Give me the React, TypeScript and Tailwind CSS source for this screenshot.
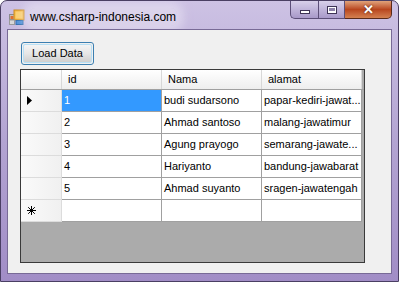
import React from "react";

const rows = [
  { id: "1", nama: "budi sudarsono", alamat: "papar-kediri-jawat..." },
  { id: "2", nama: "Ahmad santoso", alamat: "malang-jawatimur" },
  { id: "3", nama: "Agung prayogo", alamat: "semarang-jawate..." },
  { id: "4", nama: "Hariyanto", alamat: "bandung-jawabarat" },
  { id: "5", nama: "Ahmad suyanto", alamat: "sragen-jawatengah" },
];

function AppIcon() {
  return (
    <svg width="16" height="16" viewBox="0 0 16 16">
      <rect x="0.5" y="5.5" width="5" height="5" fill="#c0c0c0" stroke="#8a8a8a" />
      <rect x="1.5" y="7" width="3" height="3" fill="#e07030" />
      <rect x="5" y="1" width="10" height="10" fill="#f5b840" stroke="#c98a20" />
      <rect x="6.5" y="2.5" width="7" height="7" fill="#fbd070" />
      <rect x="0.5" y="11" width="5" height="4.5" fill="#d8d8d8" stroke="#9a9a9a" />
      <rect x="7" y="11.5" width="7" height="4" fill="#4d90d8" stroke="#2f6fb0" />
    </svg>
  );
}

export default function App() {
  const font = { fontFamily: '"Liberation Sans", Arial, sans-serif' };
  return (
    <div
      className="w-[399px] h-[282px] rounded-t-[7px] border border-[#4a3f63] bg-gradient-to-b from-[#cdc2e4] via-[#b3a4d2] to-[#a18dc6] flex flex-col overflow-hidden"
      style={font}
    >
      <div className="h-[28px] flex items-start shrink-0">
        <div className="mt-[8px] ml-[8px]">
          <AppIcon />
        </div>
        <div className="mt-[7px] ml-[4px] text-[12px] text-black px-[1px] bg-[#ebe6f4]/50 shadow-[0_0_10px_6px_rgba(236,231,246,0.55)] rounded-[6px]">
          www.csharp-indonesia.com
        </div>
        <div className="flex-1" />
        <div className="flex h-[19px] mr-[6px] -mt-px">
          <div className="w-[28px] h-full border border-[#5c4f78] border-r-0 rounded-bl-[5px] bg-gradient-to-b from-[#d8d0ea] to-[#a899c9] flex items-center justify-center">
            <div className="w-[10px] h-[4px] mt-[4px] bg-white border border-[#3d3355]" />
          </div>
          <div className="w-[27px] h-full border border-[#5c4f78] bg-gradient-to-b from-[#d8d0ea] to-[#a899c9] flex items-center justify-center">
            <div className="w-[10px] h-[8px] border border-[#3d3355] bg-white flex items-center justify-center">
              <div className="w-[6px] h-[3px] bg-[#8c80a8]" />
            </div>
          </div>
          <div className="w-[47px] h-full border border-[#5a2a1a] border-l-0 rounded-br-[5px] bg-gradient-to-b from-[#e0a27a] via-[#b8461e] to-[#d48050] flex items-center justify-center">
            <span className="text-white text-[13px] font-bold leading-none [text-shadow:0_0_2px_#4a1a08]">✕</span>
          </div>
        </div>
      </div>

      <div className="mx-[6px] mb-[7px] flex-1 border border-[#786a96] bg-[#f0f0f0] flex flex-col">
        <div className="ml-[13px] mt-[12px] w-[73px] h-[23px] rounded-[3px] border border-[#3c7fb1] p-px">
          <div className="w-full h-full rounded-[2px] bg-gradient-to-b from-[#f4f4f4] via-[#e6e6e6] to-[#cfcfcf] flex items-center justify-center text-[11px] text-black border border-[#b8e0f5]">
            Load Data
          </div>
        </div>

        <div className="ml-[12px] mt-[4px] w-[345px] h-[194px] border border-[#3a3a3a] bg-[#ababab] flex flex-col text-[11px] text-black">
          <div className="flex h-[20px] border-b border-[#a0a0a0]">
            <div className="w-[41px] border-r border-[#d8d8d8] bg-gradient-to-b from-[#ffffff] to-[#f0f0f0]" />
            {["id", "Nama", "alamat"].map((h) => (
              <div
                key={h}
                className="w-[100px] border-r border-[#d8d8d8] bg-gradient-to-b from-[#ffffff] to-[#eeeeee] flex items-center pl-[6px]"
              >
                {h}
              </div>
            ))}
          </div>
          {rows.map((r, i) => (
            <div key={r.id} className="flex h-[22px]">
              <div className="w-[41px] border-r border-b border-[#dcdcdc] bg-gradient-to-r from-[#fafafa] to-[#f0f0f0] flex items-center pl-[6px]">
                {i === 0 && (
                  <svg width="5" height="9" viewBox="0 0 5 9">
                    <path d="M0 0 L5 4.5 L0 9 Z" fill="#000" />
                  </svg>
                )}
              </div>
              <div
                className={
                  i === 0
                    ? "w-[100px] border-r border-b border-[#a0a0a0] bg-[#3399ff] text-white flex items-center pl-[2px]"
                    : "w-[100px] border-r border-b border-[#a0a0a0] bg-white flex items-center pl-[2px]"
                }
              >
                {r.id}
              </div>
              <div className="w-[100px] border-r border-b border-[#a0a0a0] bg-white flex items-center pl-[2px]">
                {r.nama}
              </div>
              <div className="w-[100px] border-r border-b border-[#a0a0a0] bg-white flex items-center pl-[2px] whitespace-nowrap overflow-hidden">
                {r.alamat}
              </div>
            </div>
          ))}
          <div className="flex h-[22px]">
            <div className="w-[41px] border-r border-b border-[#dcdcdc] bg-gradient-to-r from-[#fafafa] to-[#f0f0f0] flex items-center pl-[6px]">
              <svg width="9" height="9" viewBox="0 0 9 9" stroke="#000" strokeWidth="1">
                <path d="M4.5 0 V9 M0 4.5 H9 M1.2 1.2 L7.8 7.8 M7.8 1.2 L1.2 7.8" />
              </svg>
            </div>
            <div className="w-[100px] border-r border-b border-[#a0a0a0] bg-white" />
            <div className="w-[100px] border-r border-b border-[#a0a0a0] bg-white" />
            <div className="w-[100px] border-r border-b border-[#a0a0a0] bg-white" />
          </div>
        </div>
      </div>
    </div>
  );
}
